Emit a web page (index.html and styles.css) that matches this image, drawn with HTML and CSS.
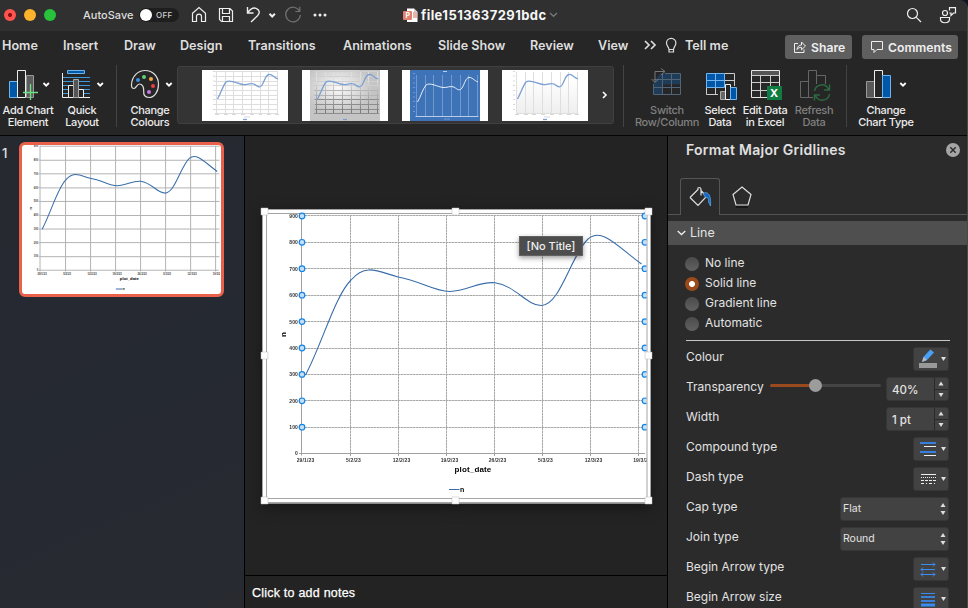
FILE: index.html
```html
<!DOCTYPE html>
<html lang="en-GB">
<head>
<meta charset="utf-8">
<title>file1513637291bdc</title>
<link rel="stylesheet" href="styles.css">
</head>
<body>
<svg class="defs" width="0" height="0" aria-hidden="true">
  <defs>
    <g id="chart-grid">
      <path d="M302 215.5H646M302 242.5H646M302 268.5H646M302 295.5H646M302 321.5H646M302 348.5H646M302 374.5H646M302 400.5H646M302 427.5H646"/>
      <path d="M350.5 215V453M398.5 215V453M446.5 215V453M494.5 215V453M542.5 215V453M590.5 215V453M638.5 215V453"/>
    </g>
    <path id="chart-axes" d="M301.500 215V455.500M299 453.500H645M350.500 453V456M398.500 453V456M446.500 453V456M494.500 453V456M542.500 453V456M590.500 453V456M638.500 453V456M299 427.500H301M299 401H301M299 374.500H301M299 348H301M299 321.500H301M299 295H301M299 268.500H301M299 242H301"/>
    <path id="chart-curve" d="M305.500 375C322 344 335 296 351 280C366 262.500 379 272 398 277C421 281 435 292 450 291.500C467 291 480 281 495 282.800C516 286 526 305 541 305.500C560 306 571 255 588 239C602 227 617 246 641.500 264"/>
    <g id="chart-labels">
      <g text-anchor="end">
        <text x="298" y="217.500">900</text><text x="298" y="244">800</text><text x="298" y="270.500">700</text><text x="298" y="297">600</text><text x="298" y="323.500">500</text><text x="298" y="350">400</text><text x="298" y="376">300</text><text x="298" y="402.500">200</text><text x="298" y="429">100</text><text x="298" y="455">0</text>
      </g>
      <g text-anchor="middle">
        <text x="305.500" y="462">29/1/23</text><text x="353.500" y="462">5/2/23</text><text x="401.500" y="462">12/2/23</text><text x="449.500" y="462">19/2/23</text><text x="497.500" y="462">26/2/23</text><text x="545.500" y="462">5/3/23</text><text x="593.500" y="462">12/3/23</text><text x="642" y="462">19/3/23</text>
        <text class="axis-title" x="473" y="472">plot_date</text>
        <text class="axis-name" transform="translate(285.500 334.500) rotate(-90)">n</text>
      </g>
      <text class="legend-name" x="460" y="492">n</text>
    </g>
    <path id="mini-grid" d="M13 1.500H76M13 6.500H76M13 11.500H76M13 15.500H76M13 20.500H76M13 25.500H76M13 29.500H76M13 34.500H76M13 39.500H76M13 43.500H76"/>
    <path id="mini-cols" d="M14.500 2V43M23.500 2V43M31.500 2V43M40.500 2V43M49.500 2V43M58.500 2V43M66.500 2V43M75.500 2V43"/>
    <path id="mini-curve" d="M15.500 29C19 23 20.500 16.500 24 12C28 9 36 14 41 14.500C45 15 48 12.500 52 14C56 17 58 18 60 15C63 10 63.500 5 67 4.500C70 4 72 7.500 76 9"/>
    <path id="mini-text" d="M11 1.500H13M11 6H13M11 11H13M11 15.500H13M11 20.500H13M11 25H13M11 29.500H13M11 34.500H13M11 39.500H13M13 44.500H17M22 44.500H26M30 44.500H34M39 44.500H43M48 44.500H52M57 44.500H60M65 44.500H69M73 44.500H77M42 47H48"/>
    <path id="drop" d="M0 0L2.700 2.700L5.400 0"/>
  </defs>
</svg>
<div class="window">
  <header class="titlebar">
    <div class="lights"><i class="red"></i><i class="amber"></i><i class="green"></i></div>
    <span class="autosave">AutoSave</span>
    <span class="switch"><i></i>OFF</span>
    <svg class="quick" width="146" height="30" viewBox="186 0 146 30">
      <path d="M192.500 13.200L199 7.500L205.500 13.200V21.500H201.500V16.500Q201.500 14.200 199 14.200Q196.500 14.200 196.500 16.500V21.500H192.500Z"/>
      <path d="M219.500 8.500H230L232.500 11V21.500H221.500L219.500 19.500ZM222.500 8.500V13.500H229.500V8.500M222.500 21V16.500H229.500V21.500"/>
      <path d="M247.500 7V13H253.500M247.700 12.700C250 9.500 253 7.400 256 8.300C260 9.700 260 13.300 257.500 15.800L251 22" stroke-width="1.400"/>
      <use href="#drop" x="269.500" y="13.800" stroke-width="2"/>
      <g stroke="#727272"><path d="M299.300 10.800A7.300 7.300 0 1 0 300.300 15M299.800 6.800V11.500H295.300"/></g>
      <g fill="#eee" stroke="none"><circle cx="315" cy="15" r="1.500"/><circle cx="320" cy="15" r="1.500"/><circle cx="325" cy="15" r="1.500"/></g>
    </svg>
    <div class="doc">
      <svg width="15" height="15" viewBox="0 0 15 15"><path fill="#fff" d="M4 .5H11L14.500 4V14H4Z"/><path fill="#e9b5aa" d="M10 4H14V10H10Z"/><path fill="#ccc" d="M11 .5V4H14.500Z"/><rect y="3" width="9" height="9" rx="1" fill="#df8070"/><text x="2.500" y="10" class="ppt">P</text></svg>
      <strong>file1513637291bdc</strong>
      <svg width="9" height="6" viewBox="0 0 9 6"><path d="M1 1L4.500 4.300L8 1" fill="none" stroke="#777" stroke-width="1.300"/></svg>
    </div>
    <svg class="finders" width="60" height="30" viewBox="900 0 60 30">
      <circle cx="912.500" cy="13.500" r="5"/><path d="M916.300 17.300L921 22"/>
      <circle cx="945" cy="13" r="2.500"/><path d="M940.500 17.500H949.500V19C949.500 24 940.500 24 940.500 19ZM949.500 10.500V7.700H955.500V13H953.500L951 15.500V13H949.300"/>
    </svg>
  </header>

  <nav class="tabs">
    <span>Home</span><span>Insert</span><span>Draw</span><span>Design</span><span>Transitions</span><span>Animations</span><span>Slide Show</span><span>Review</span><span>View</span>
    <svg width="36" height="24" viewBox="643 33 36 24"><path d="M645 41L649 45L645 49M651 41L655 45L651 49" stroke-width="1.700"/><path d="M669 49.500C669 47 666.500 46 666.500 43A4.700 4.700 0 0 1 675.900 43C675.900 46 673.500 47 673.500 49.500ZM669 50V52H673.500V50" stroke-width="1.200"/></svg>
    <span>Tell me</span>
    <div class="actions">
      <button class="share"><svg width="14" height="14" viewBox="0 0 14 14"><path d="M5 3.500H1.500V12.500H11V9.500M4 9.500C4.500 6.500 6 5 8.500 5V2L12.500 6L8.500 9.800V7.300C6.500 7.300 5 8 4 9.500Z"/></svg>Share</button>
      <button class="comments"><svg width="14" height="14" viewBox="0 0 14 14"><path d="M1.500 1.500H12.500V9.500H7L4 12.500V9.500H1.500Z"/></svg>Comments</button>
    </div>
  </nav>

  <section class="ribbon">
    <div class="tool"><svg width="56" height="38" viewBox="0 66 56 38">
      <path d="M9.500 81.500H17.500V97.500H9.500Z" fill="#0057a8" stroke="#6fb5ed"/><path d="M26.500 75.500H33.500V97.500H26.500Z" fill="#5c5c5c" stroke="#999"/><path d="M17.500 70.500H25.500V97.500H17.500Z" fill="#262626" stroke="#eee"/><path d="M30.500 84V100M23 92.500H38" stroke="#6ae080" stroke-width="1.300" fill="none"/><use class="drop" href="#drop" x="43.500" y="83"/></svg>Add Chart<br>Element</div>
    <div class="tool"><svg width="52" height="38" viewBox="56 66 52 38">
      <path d="M67.500 70.500H84.500V73.500H67.500Z" fill="#0057a8" stroke="#6fb5ed"/><path d="M63 77.500H90M63 81.500H90M63 85.500H90M63 89.500H90M63 93.500H90" stroke="#3c98dc"/><path d="M62.500 73V97.500H90" fill="none" stroke="#eee"/><path d="M68.500 85.500H73.500V97.500H68.500ZM78.500 89.500H83.500V97.500H78.500Z" fill="#262626" stroke="#eee"/><path d="M73.500 79.500H78.500V97.500H73.500Z" fill="#555" stroke="#aaa"/><use class="drop" href="#drop" x="97.500" y="83"/></svg>Quick<br>Layout</div>
    <hr class="rule a">
    <div class="tool"><svg width="56" height="38" viewBox="122 66 56 38">
      <path d="M131.500 84.500C132 76 138 70.500 145 70.500C153 70.500 158.500 76.500 158.500 84.500C158.500 92 154 97.500 149 97.500C144 97.500 143.500 94 143.700 91C144 86.500 142 84 139.500 84C136.500 84 136.500 88.500 134 88.500C132 88.500 131.400 87 131.500 84.500Z" fill="none" stroke="#ddd" stroke-width="1.200"/><circle cx="138" cy="80" r="2" fill="#3492e6"/><circle cx="144" cy="77" r="2" fill="#5bd373"/><circle cx="151" cy="79" r="2" fill="#f7a64a"/><circle cx="153" cy="86" r="2" fill="#ef3e45"/><circle cx="149" cy="92" r="2" fill="#c77add"/><use class="drop" href="#drop" x="166.300" y="83"/></svg>Change<br>Colours</div>
    <div class="gallery">
      <svg width="86" height="51"><rect width="86" height="51" fill="#fff"/><use class="mini soft" href="#mini-grid"/><use class="mini soft" href="#mini-cols"/><use class="mini note" href="#mini-text"/><use class="mini line" href="#mini-curve"/><path class="mini line" d="M41 49.500H45"/></svg>
      <svg width="86" height="51"><defs><radialGradient id="glass" cx=".4" cy=".35"><stop offset="0" stop-color="#fafafa"/><stop offset="1" stop-color="#c4c4c4"/></radialGradient><linearGradient id="fade" x2="0" y2="1"><stop offset=".2" stop-color="#ddd"/><stop offset="1" stop-color="#777"/></linearGradient></defs><rect width="86" height="51" fill="#fff"/><rect x="8" width="70" height="51" fill="url(#glass)"/><g class="mini"><path stroke="#cfcfcf" d="M12 1.500H77M12 6.500H77M12 11.500H77M12 15.500H77"/><path stroke="#b5b5b5" d="M12 20.500H77M12 25.500H77"/><path stroke="#8c8c8c" d="M12 29.500H77M12 34.500H77M12 39.500H77M12 43.500H77"/><use href="#mini-cols" stroke="url(#fade)"/></g><use class="mini note" href="#mini-text"/><use class="mini line" href="#mini-curve"/><path class="mini line" d="M41 49.500H45"/></svg>
      <svg width="86" height="51"><rect width="86" height="51" fill="#fff"/><rect x="8" width="70" height="51" fill="#3f73b8"/><g class="mini" stroke="#7199cf"><use href="#mini-cols" y="3"/><use href="#mini-text" y="2"/><path d="M14 46.500H76M41 1.500H45" stroke="#b8cce8"/></g><use class="mini" stroke="#e5effb" href="#mini-curve" y="3"/></svg>
      <svg width="86" height="51"><defs><linearGradient id="floor" x2="0" y2="1"><stop offset=".2" stop-color="#fff"/><stop offset="1" stop-color="#eee"/></linearGradient></defs><rect width="86" height="51" fill="#fff"/><rect x="14" y="1" width="62" height="43" fill="url(#floor)"/><use class="mini soft" href="#mini-cols"/><path class="mini soft" d="M14 43.500H76"/><use class="mini note" href="#mini-text"/><use class="mini line" href="#mini-curve"/><path class="mini line" d="M41 49.500H45"/></svg>
      <svg class="next" width="6" height="8" viewBox="0 0 6 8"><path d="M1 1L4 4L1 7" fill="none" stroke="#fff" stroke-width="1.600"/></svg>
    </div>
    <hr class="rule b">
    <div class="tool dim"><svg width="66" height="38" viewBox="634 66 66 38"><path d="M660 73.500H680.500V84.500H672V94.500H653.500V83Z" fill="#1e3c58"/><path d="M672 84.500H680.500V94.500H663V84.500Z" fill="#262626"/><g fill="none"><path d="M662.500 73V94.500M671.500 73V94.500M653.500 79.500H680.500M653.500 87.500H680.500M653.500 84V94.500H680.500V73.500H665" stroke="#526577"/><path d="M655 82V71.500H665M651.500 79L655 82.500L658.500 79M661 68.500L665 71.500L661 75" stroke="#777"/></g></svg>Switch<br>Row/Column</div>
    <div class="tool"><svg width="40" height="38" viewBox="700 66 40 38"><path d="M706.500 73.500H724.500V87.500H706.500Z" fill="#0057a8"/><g fill="none"><path d="M724.500 73.500H734.500V86M706.500 87.500V94.500H718M706.500 87.500H720M715.500 87V94M724.500 80.500H734" stroke="#ccc"/><path d="M706.500 73.500H724.500V87.500H706.500ZM715.500 73V87M706.500 80.500H725" stroke="#72b6ef"/></g><path d="M720.500 91.500H725.500V99.500H720.500Z" fill="#666" stroke="#aaa"/><path d="M725.500 84.500H730.500V99.500H725.500Z" fill="#262626" stroke="#eee"/><path d="M730.500 87.500H736.500V99.500H730.500Z" fill="#0057a8" stroke="#72b6ef"/></svg>Select<br>Data</div>
    <div class="tool"><svg width="50" height="38" viewBox="740 66 50 38"><path d="M751.500 70.500H779.500V97.500H751.500Z" fill="#292929" stroke="#e5e5e5"/><path d="M752 71H779V75H752Z" fill="#555"/><path d="M751.500 75.500H779.500M751.500 82.500H779.500M751.500 90.500H779.500M760.500 75V97M770.500 75V97" stroke="#ccc"/><rect x="767" y="86" width="15" height="14" rx=".5" fill="#117c42"/><text class="excel" x="770" y="97">X</text></svg>Edit Data<br>in Excel</div>
    <div class="tool dim"><svg width="48" height="38" viewBox="790 66 48 38"><g fill="none" stroke="#666"><path d="M800.500 81.500H808.500V97.500H800.500ZM808.500 70.500H816.500V97.500H808.500ZM816.500 75.500H825.500V97.500H816.500Z"/></g><path d="M813 84H832V101H813Z" fill="#262626"/><path d="M814.500 91A7.300 7.300 0 0 1 828.500 89.500M829.500 84.500V90H824M829.500 94A7.300 7.300 0 0 1 815.500 95.500M814.500 100.500V95H820" fill="none" stroke="#2c6840" stroke-width="1.500"/></svg>Refresh<br>Data</div>
    <hr class="rule c">
    <div class="tool"><svg width="66" height="38" viewBox="852 66 66 38"><path d="M866.500 81.500H874.500V97.500H866.500Z" fill="#585858" stroke="#999"/><path d="M874.500 70.500H882.500V97.500H874.500Z" fill="#262626" stroke="#eee"/><path d="M882.500 75.500H890.500V97.500H882.500Z" fill="#0057a8" stroke="#6fb5ed"/><use class="drop" href="#drop" x="900.300" y="83"/></svg>Change<br>Chart Type</div>
  </section>

  <main class="work">
    <aside class="slides">
      <span class="num">1</span>
      <div class="thumb">
        <svg class="chart small" width="198" height="148" viewBox="266.900 213.200 380 284">
          <use class="grid" href="#chart-grid"/><use class="axes" href="#chart-axes"/><use class="labels" href="#chart-labels"/><use class="curve" href="#chart-curve"/><path class="curve" d="M447 489.500H459"/>
        </svg>
      </div>
    </aside>
    <section class="editor">
      <div class="canvas">
        <svg class="chart" width="397" height="302" viewBox="258 205 397 302">
          <rect x="262" y="209" width="389" height="294.500" fill="#fff"/>
          <path d="M262.500 209.500H650.500V502.500H262.500ZM266.500 213.500H647V498.500H266.500Z" fill="none" stroke="#a5a5a5"/>
          <svg x="267" y="212" width="379.500" height="286" viewBox="267 212 379.500 286">
            <use class="grid-base" href="#chart-grid"/><use class="grid" href="#chart-grid"/><use class="axes" href="#chart-axes"/><use class="labels" href="#chart-labels"/><use class="curve" href="#chart-curve"/><path class="curve" d="M449 489.500H459.500"/>
            <g class="knobs"><circle cx="302" cy="216" r="2.800"/><circle cx="302" cy="242.300" r="2.800"/><circle cx="302" cy="268.700" r="2.800"/><circle cx="302" cy="295.200" r="2.800"/><circle cx="302" cy="321.600" r="2.800"/><circle cx="302" cy="348" r="2.800"/><circle cx="302" cy="374.400" r="2.800"/><circle cx="302" cy="400.800" r="2.800"/><circle cx="302" cy="427.200" r="2.800"/><circle cx="645" cy="216" r="2.800"/><circle cx="645" cy="242.300" r="2.800"/><circle cx="645" cy="268.700" r="2.800"/><circle cx="645" cy="295.200" r="2.800"/><circle cx="645" cy="321.600" r="2.800"/><circle cx="645" cy="348" r="2.800"/><circle cx="645" cy="374.400" r="2.800"/><circle cx="645" cy="400.800" r="2.800"/><circle cx="645" cy="427.200" r="2.800"/></g>
          </svg>
          <path class="handles" d="M261 208h7v7h-7zM452 208h7v7h-7zM645 208h7v7h-7zM261 352h7v7h-7zM645 352h7v7h-7zM261 497h7v7h-7zM452 497h7v7h-7zM645 497h7v7h-7z"/>
        </svg>
        <span class="tooltip">[No Title]</span>
      </div>
      <div class="notes">Click to add notes</div>
    </section>
    <aside class="panel">
      <div class="panel-head"><h2>Format Major Gridlines</h2><svg width="14" height="14" viewBox="0 0 14 14"><circle cx="7" cy="7" r="7" fill="#a5a5a5"/><path d="M4.300 4.300L9.700 9.700M9.700 4.300L4.300 9.700" stroke="#2b2b2b" stroke-width="1.400"/></svg></div>
      <div class="panel-tabs">
        <span class="ptab"><svg width="38" height="34" viewBox="681 179 38 34"><path d="M690 197.500L698 189.500Q697.500 187.500 699 187.500Q701 187.300 701 190V195.500M701 190.500L706.500 196.500L698 205.500L690 197.500" fill="none" stroke="#ddd" stroke-width="1.200"/><path d="M703 193.500C707 191 711.500 193.500 710.500 206L708.500 202C709 198.500 707.500 197 705.500 197.500Z" fill="#1769c2" stroke="#67adec" stroke-width=".7"/></svg></span>
        <svg width="40" height="36" viewBox="720 178 40 36"><path d="M736 206H748V208H736Z" fill="#171717"/><path d="M742 187L751 194.500L748 205H736L733 194.500Z" fill="none" stroke="#ddd" stroke-width="1.200"/></svg>
      </div>
      <div class="section"><svg width="9" height="6" viewBox="0 0 9 6"><path d="M.7 1L4.500 4.500L8.300 1" fill="none" stroke="#eee" stroke-width="1.300"/></svg>Line</div>
      <div class="radios"><label><i></i>No line</label><label><i class="on"></i>Solid line</label><label><i></i>Gradient line</label><label><i></i>Automatic</label></div>
      <div class="fields">
        <div class="row"><span>Colour</span><div class="pick"><svg width="34" height="22" viewBox="914 348 34 22"><rect x="919" y="363" width="18" height="5" fill="#999"/><path d="M927.500 352.500L930.500 349.500L934 352.500L927 360L922 362L923.500 357Z" fill="#4a9ff5"/><path d="M922 362L923.500 357L927 360Z" fill="#bbb"/><path class="tri" d="M941 357H946L943.500 361Z"/></svg></div></div>
        <div class="row"><span>Transparency</span><div class="slider"><i></i></div><div class="spin">40%<svg width="14" height="22" viewBox="0 0 14 22"><path d="M.5 0V22M0 11.500H14" stroke="#292929"/><path class="tri" d="M4.500 7.500H9.500L7 3.500ZM4.500 15H9.500L7 19Z"/></svg></div></div>
        <div class="row"><span>Width</span><div class="spin">1 pt<svg width="14" height="22" viewBox="0 0 14 22"><path d="M.5 0V22M0 11.500H14" stroke="#292929"/><path class="tri" d="M4.500 7.500H9.500L7 3.500ZM4.500 15H9.500L7 19Z"/></svg></div></div>
        <div class="row"><span>Compound type</span><div class="pick"><svg width="34" height="22" viewBox="914 438 34 22"><path d="M920 443H936M920 452H936" stroke="#347fe0" stroke-width="2"/><path d="M924 446.500H936M924 455.500H936" stroke="#eee"/><path class="tri" d="M941 447H946L943.500 451Z"/></svg></div></div>
        <div class="row"><span>Dash type</span><div class="pick"><svg width="34" height="22" viewBox="914 468 34 22"><g stroke="#eee"><path d="M921 474.500H936"/><path d="M921 477.500H936" stroke-dasharray="1 1"/><path d="M921 480.500H936" stroke-dasharray="3 1"/><path d="M921 483.500H936" stroke-dasharray="3 2 1 2"/></g><path class="tri" d="M941 477H946L943.500 481Z"/></svg></div></div>
        <div class="row"><span>Cap type</span><div class="select">Flat<svg width="6" height="14" viewBox="0 0 6 14"><path class="tri" d="M.5 5H5.500L3 1ZM.5 9H5.500L3 13Z"/></svg></div></div>
        <div class="row"><span>Join type</span><div class="select">Round<svg width="6" height="14" viewBox="0 0 6 14"><path class="tri" d="M.5 5H5.500L3 1ZM.5 9H5.500L3 13Z"/></svg></div></div>
        <div class="row"><span>Begin Arrow type</span><div class="pick"><svg width="34" height="22" viewBox="914 558 34 22"><path d="M921 564.500H935M921 569.500H935M921 574.500H935M933 562.500L935 564.500L933 566.500M923 567.500L921 569.500L923 571.500M923 572.500L921 574.500L923 576.500M933 572.500L935 574.500L933 576.500" fill="none" stroke="#3b8cf0"/><path class="tri" d="M941 567H946L943.500 571Z"/></svg></div></div>
        <div class="row"><span>Begin Arrow size</span><div class="pick"><svg width="34" height="22" viewBox="914 588 34 22"><path d="M921 593.500H935" stroke="#3b8cf0"/><path d="M921 597H935M921 601H935" stroke="#3b7fd8" stroke-width="2"/><path d="M921 605H935" stroke="#3b8cf0" stroke-width="3"/><path class="tri" d="M941 597H946L943.500 601Z"/></svg></div></div>
      </div>
    </aside>
  </main>
</div>
</body>
</html>
```
FILE: styles.css
```css
* { box-sizing: border-box; }
body { margin: 0; background: #101722; font-family: Inter, "Liberation Sans", sans-serif; color: #e2e2e2; }
.defs { position: absolute; }
svg { display: block; flex: none; }
.window { width: 968px; height: 608px; overflow: hidden; border-top-right-radius: 9px; background: #262626; border-right: 1px solid #484848; display: flex; flex-direction: column; }

.titlebar { height: 31px; flex: none; background: #303030; display: flex; align-items: flex-start; }
.lights { display: flex; gap: 8px; padding: 9px 0 0 4px; width: 83px; }
.lights i { width: 12px; height: 12px; border-radius: 50%; }
.red { background: radial-gradient(circle, #8c0d0c 0 1.8px, #ff544e 2.300px); }
.amber { background: #fdb32b; }
.green { background: #27c13c; }
.autosave { width: 56px; font-size: 11px; font-weight: 500; line-height: 30px; color: #dedede; }
.switch { width: 40px; height: 14px; margin-top: 8px; border-radius: 7px; background: #1e1e1e; display: flex; align-items: center; gap: 4px; font-size: 8px; font-weight: 500; letter-spacing: .3px; color: #d0d0d0; }
.switch i { width: 12px; height: 12px; margin-left: 1px; border-radius: 50%; background: #fff; }
.quick { margin-left: 7px; fill: none; stroke: #eee; stroke-width: 1.2; }
.doc { margin-left: 71px; height: 30px; display: flex; align-items: center; gap: 3px; }
.doc strong { font-size: 13px; font-weight: 700; letter-spacing: .43px; color: #f6f6f6; width: 125px; white-space: nowrap; }
.ppt { font: 700 7px Inter, sans-serif; fill: #fff; }
.finders { margin-left: auto; margin-right: 7px; fill: none; stroke: #eee; stroke-width: 1.2; }

.tabs { height: 29px; flex: none; display: grid; grid-template-columns: 61px 61px 56px 68px 95px 95px 92px 68px 45px 42px 100px 183px; padding-left: 2px; font-size: 12.600px; font-weight: 600; line-height: 29px; color: #dedede; white-space: nowrap; }
.tabs svg { fill: none; stroke: #ddd; margin-top: 2px; }
.actions { display: flex; gap: 10px; padding-top: 4px; }
.actions button { height: 24px; border: 0; border-radius: 3px; background: #5f5f5f; color: #f0f0f0; font: 600 12.200px Inter, sans-serif; padding: 0 0 0 8px; display: flex; align-items: center; gap: 4px; }
.actions button svg { margin: 0; stroke: #eee; }
.share { width: 67px; }
.comments { width: 96px; }

.ribbon { height: 76px; flex: none; display: grid; grid-template-columns: 56px 52px 14px 56px 436px 20px 66px 40px 50px 48px 14px 68px; padding-top: 6px; border-bottom: 1px solid #050505; }
.tool { font-size: 11px; font-weight: 500; line-height: 12px; letter-spacing: -.3px; word-spacing: .3px; text-align: center; color: #ececec; white-space: nowrap; display: block; }
.tool.dim { color: #808080; }
.drop { fill: none; stroke: #fff; stroke-width: 1.800; }
.rule { width: 1px; height: 62px; border: 0; margin: -1px 0 0 8px; background: #434343; }
.rule.b { margin-left: 9px; }
.gallery { height: 58px; border: 1px solid #404040; border-radius: 3px; background: #343434; display: flex; gap: 14px; padding: 3px 0 0 24px; margin-left: -1px; }
.gallery .next { margin: 21px 0 0 0; }
.mini { fill: none; }
.soft { stroke: #dedede; }
.note { stroke: #c7c7c7; stroke-width: .7; }
.line { stroke: #7ba0d3; stroke-width: 1.300; }
.excel { font: 700 11px Inter, sans-serif; fill: #fff; }

.work { flex: 1; min-height: 0; display: grid; grid-template-columns: 245px 423px 299px; }
.slides { display: flex; align-items: flex-start; background: linear-gradient(155deg, #262930, #252932 55%, #282a30); border-right: 1px solid #000; }
.num { width: 19px; padding: 9px 0 0 2px; font-size: 13px; line-height: 16px; font-weight: 500; }
.thumb { width: 205px; height: 155px; margin-top: 6px; border: 3px solid #e9604b; border-radius: 6px; background: #fff; overflow: hidden; }
.editor { display: flex; flex-direction: column; border-right: 1px solid #000; background: #232323; }
.canvas { height: 439px; padding: 69px 0 0 13px; position: relative; }
.canvas .chart { filter: drop-shadow(0 4px 7px #171717); }
.notes { flex: 1; border-top: 1px solid #000; border-bottom: 1px solid #000; padding-left: 7px; font: 500 12.500px/34px "Liberation Sans", sans-serif; letter-spacing: .22px; color: #fff; -webkit-text-stroke: .25px #fff; }
.tooltip { position: absolute; left: 274px; top: 100px; width: 64px; height: 20px; font-size: 11px; font-weight: 500; line-height: 19px; text-align: center; color: #eee; background: #4d4d4d; border: 1px solid #626262; box-shadow: 0 2px 5px #0006; }
.grid-base { fill: none; stroke: #d0d0d0; }
.grid { fill: none; stroke: #a8a8a8; stroke-dasharray: 2 1; }
.axes { fill: none; stroke: #a0a0a0; }
.curve { fill: none; stroke: #386daa; stroke-width: 1.100; }
.labels { font: 700 5px "Liberation Sans", sans-serif; letter-spacing: .15px; fill: #333; }
.axis-title { font-size: 8px; fill: #000; }
.axis-name, .legend-name { font-size: 7px; fill: #000; }
.axis-name { font-size: 8px; }
.small .grid { stroke: #b2b2b2; stroke-width: 1.900; stroke-dasharray: none; }
.small .axes { stroke-width: 1.500; }
.small .curve { stroke-width: 2; }
.knobs { fill: #c2e0fa; stroke: #1683e2; stroke-width: 1.200; }
.handles { fill: #fff; stroke: #bbb; stroke-width: .5; }

.panel { background: #2b2b2b; overflow: hidden; border-bottom: 1px solid #080808; }
.panel-head { height: 42px; display: flex; justify-content: space-between; padding: 5px 7px 0 18px; }
.panel h2 { margin: 0; font-size: 14px; line-height: 17px; font-weight: 600; letter-spacing: .27px; color: #e0e0e0; white-space: nowrap; }
.panel-head svg { margin-top: 2px; }
.panel-tabs { height: 37px; border-bottom: 1px solid #555; display: flex; padding-left: 12px; }
.ptab { width: 40px; height: 37px; border: 1px solid #555; border-bottom: 0; border-radius: 3px 3px 0 0; background: #2b2b2b; }
.section { margin-top: 6px; height: 24px; background: #4f4f4f; display: flex; align-items: center; gap: 4px; padding: 0 0 1px 9px; font-size: 12.500px; }
.radios { height: 95px; padding: 8px 0 0 17px; font-size: 12px; }
.radios label { height: 20px; line-height: 20px; display: flex; gap: 6px; }
.radios i { width: 14px; height: 14px; margin-top: 4px; border-radius: 50%; background: linear-gradient(#4b4b4b, #616161); }
.radios .on { background: radial-gradient(circle, #fff 0 2.600px, #9c4a1b 3.300px); }
.fields { margin-left: 18px; width: 264px; border-top: 1px solid #c8c8c8; padding-top: 1px; font-size: 12px; }
.row { height: 30px; display: flex; line-height: 30px; padding-right: 1px; justify-content: space-between; }
.row > span { white-space: nowrap; }
.pick, .spin, .select { margin-top: 5px; height: 24px; background: #424242; border: 1px solid #363636; border-radius: 3px; flex: none; }
.pick { width: 36px; }
.spin { width: 63px; display: flex; justify-content: space-between; padding-left: 5px; font-size: 11.500px; font-weight: 500; line-height: 24px; }
.select { width: 109px; display: flex; align-items: center; justify-content: space-between; padding: 0 2px; font-size: 10.500px; }
.tri { fill: #dedede; }
.slider { width: 111px; height: 3px; margin: 12px 5px 0 auto; border-radius: 2px; background: linear-gradient(90deg, #9a4a1c 40%, #444 40%); }
.slider i { display: block; width: 13px; height: 13px; margin: -5px 0 0 39px; border-radius: 50%; background: #9c9c9c; }
```
